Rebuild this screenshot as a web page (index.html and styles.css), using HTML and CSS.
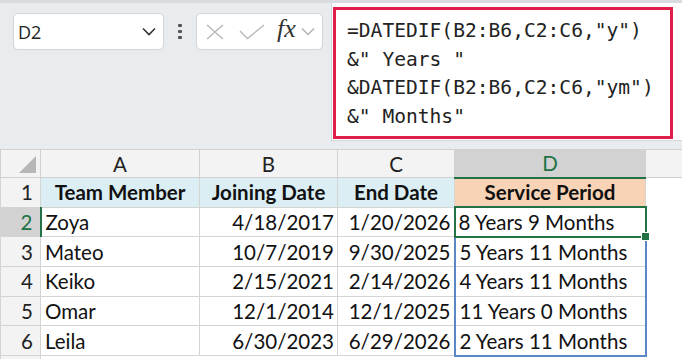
FILE: index.html
```html
<!DOCTYPE html>
<html lang="en">
<head>
<meta charset="UTF-8">
<title>Service Period</title>
<link rel="stylesheet" href="styles.css">
</head>
<body>
<div class="toolbar">
    <div class="namebox">
        <span>D2</span>
        <svg class="chev" width="14" height="9" viewBox="0 0 14 9"><path d="M1 1.5 L7 7.5 L13 1.5" fill="none" stroke="#333" stroke-width="1.6"/></svg>
    </div>
    <div class="dots"><i></i><i></i><i></i></div>
    <div class="fxbox">
        <svg width="18" height="16" viewBox="0 0 18 16"><path d="M1 1 L17 15 M17 1 L1 15" stroke="#b8b8b8" stroke-width="1.4" fill="none"/></svg>
        <svg width="26" height="16" viewBox="0 0 26 16"><path d="M1 7 L8.5 14.5 L25 1" stroke="#b8b8b8" stroke-width="1.4" fill="none"/></svg>
        <span class="fx">fx</span>
        <svg class="chev" width="14" height="9" viewBox="0 0 14 9"><path d="M1 1.5 L7 7.5 L13 1.5" fill="none" stroke="#b0b0b0" stroke-width="1.4"/></svg>
    </div>
    <div class="formula">
        <div class="highlight">
            <div class="line">=DATEDIF(B2:B6,C2:C6,"y")</div>
            <div class="line">&amp;" Years "</div>
            <div class="line">&amp;DATEDIF(B2:B6,C2:C6,"ym")</div>
            <div class="line">&amp;" Months"</div>
        </div>
    </div>
</div>

<table class="sheet">
    <colgroup>
        <col style="width:40px"><col style="width:159px"><col style="width:138px"><col style="width:117px"><col style="width:191px"><col>
    </colgroup>
    <tr class="colhead">
        <th class="corner"></th><th>A</th><th>B</th><th>C</th><th class="sel">D</th><th class="blank"></th>
    </tr>
    <tr class="title">
        <th class="rownum">1</th><td>Team Member</td><td>Joining Date</td><td>End Date</td><td class="peach">Service Period</td><td class="empty"></td>
    </tr>
    <tr>
        <th class="rownum sel">2</th><td>Zoya</td><td class="num">4/18/2017</td><td class="num">1/20/2026</td><td class="active">8 Years 9 Months<span class="handle"></span></td><td class="empty"></td>
    </tr>
    <tr>
        <th class="rownum">3</th><td>Mateo</td><td class="num">10/7/2019</td><td class="num">9/30/2025</td><td class="spill">5 Years 11 Months</td><td class="empty"></td>
    </tr>
    <tr>
        <th class="rownum">4</th><td>Keiko</td><td class="num">2/15/2021</td><td class="num">2/14/2026</td><td class="spill">4 Years 11 Months</td><td class="empty"></td>
    </tr>
    <tr>
        <th class="rownum">5</th><td>Omar</td><td class="num">12/1/2014</td><td class="num">12/1/2025</td><td class="spill">11 Years 0 Months</td><td class="empty"></td>
    </tr>
    <tr>
        <th class="rownum">6</th><td>Leila</td><td class="num">6/30/2023</td><td class="num">6/29/2026</td><td class="spill last">2 Years 11 Months</td><td class="empty"></td>
    </tr>
    <tr class="next">
        <th class="rownum"></th><td class="empty"></td><td class="empty"></td><td class="empty"></td><td class="empty"></td><td class="empty"></td>
    </tr>
</table>
</body>
</html>
```

FILE: styles.css
```css
body {
    margin: 0;
    background-color: #fff;
    font-family: Lato, "Open Sans", sans-serif;
    width: 682px;
    height: 359px;
    overflow: hidden;
}
.toolbar {
    height: 146px;
    background-color: #e9ecef;
    border-top: 3px solid #d9dcdf;
    display: flex;
    align-items: flex-start;
}
.namebox {
    margin: 10px 0 0 13px;
    width: 151px;
    height: 37px;
    box-sizing: border-box;
    background-color: #fff;
    border: 1px solid #d3d6d9;
    border-radius: 5px;
    display: flex;
    align-items: center;
    justify-content: space-between;
    padding: 0 7px 0 4px;
    font-family: "Open Sans", sans-serif;
    font-size: 18px;
    color: #222;
}
.dots {
    margin: 12px 0 0 14px;
    width: 4px;
    height: 15px;
    display: flex;
    flex-direction: column;
    justify-content: space-between;
    padding-top: 9px;
}
.dots i {
    display: block;
    width: 4px;
    height: 3px;
    background-color: #555;
    border-radius: 1px;
}
.fxbox {
    margin: 10px 0 0 14px;
    width: 127px;
    height: 37px;
    box-sizing: border-box;
    background-color: #fff;
    border: 1px solid #d3d6d9;
    border-radius: 5px;
    display: flex;
    align-items: center;
    padding: 0 4px 0 9px;
    gap: 15px;
}
.fxbox .fx {
    font-family: "Liberation Serif", serif;
    font-style: italic;
    font-size: 26px;
    color: #333;
    margin-left: -3px;
    margin-top: -5px;
}
.fxbox .chev {
    margin-left: -10px;
}
.formula {
    margin-left: 8px;
    flex: 1;
    height: 138px;
    background-color: #fff;
    border-left: 1px solid #d6d6d6;
    border-bottom: 1px solid #d6d6d6;
    padding: 4px 9px 0 1px;
    box-sizing: border-box;
}
.highlight {
    border: 3px solid #e0204a;
    height: 132px;
    box-sizing: border-box;
    padding: 7px 0 0 11px;
    font-family: "DejaVu Sans Mono", monospace;
    font-size: 19.6px;
    line-height: 28.7px;
    color: #222;
}
.highlight .line {
    white-space: pre;
}
.sheet {
    border-collapse: collapse;
    table-layout: fixed;
    width: 682px;
    font-size: 20.5px;
    line-height: 22px;
    color: #111;
}
.sheet th, .sheet td {
    border: 1px solid #d4d4d4;
    padding: 0 4px;
    height: 29.7px;
    box-sizing: border-box;
    white-space: nowrap;
    overflow: visible;
}
.sheet .colhead th {
    height: 28px;
    background-color: #f3f3f3;
    font-weight: normal;
    color: #222;
    border-color: #d0d0d0;
}
.sheet .colhead th.corner {
    position: relative;
}
.colhead th.corner::after {
    content: "";
    position: absolute;
    right: 4px;
    bottom: 4px;
    border-style: solid;
    border-width: 0 0 17px 17px;
    border-color: transparent transparent #b7b7b7 transparent;
}
.sheet .colhead th.sel {
    background-color: #d2d2d2;
    color: #217346;
    border-bottom: 2px solid #217346;
}
.sheet .colhead th.blank {
    border-right: none;
}
.sheet th.rownum {
    background-color: #f3f3f3;
    font-weight: normal;
    color: #222;
    text-align: right;
    padding-right: 7px;
}
.sheet th.rownum.sel {
    background-color: #d2d2d2;
    color: #217346;
    border-right: 2px solid #217346;
}
.sheet .title td {
    background-color: #dbeef4;
    font-weight: bold;
    text-align: center;
}
.sheet .title td.peach {
    background-color: #f9d3b5;
}
.sheet td.empty {
    background-color: #fff;
    border: none;
}
.sheet .next th, .sheet .next td {
    height: 4px;
    line-height: 4px;
}
.sheet td.num {
    text-align: right;
    padding-right: 3px;
}
.sheet td.active {
    position: relative;
    border: 2px solid #217346;
    padding-left: 3px;
}
.handle {
    position: absolute;
    right: -5px;
    bottom: -5px;
    width: 7px;
    height: 7px;
    background-color: #217346;
    border: 1px solid #fff;
}
.sheet td.spill {
    border-left: 2px solid #5b87c9;
    border-right: 2px solid #5b87c9;
}
.sheet td.spill.last {
    border-bottom: 2px solid #5b87c9;
}
```
